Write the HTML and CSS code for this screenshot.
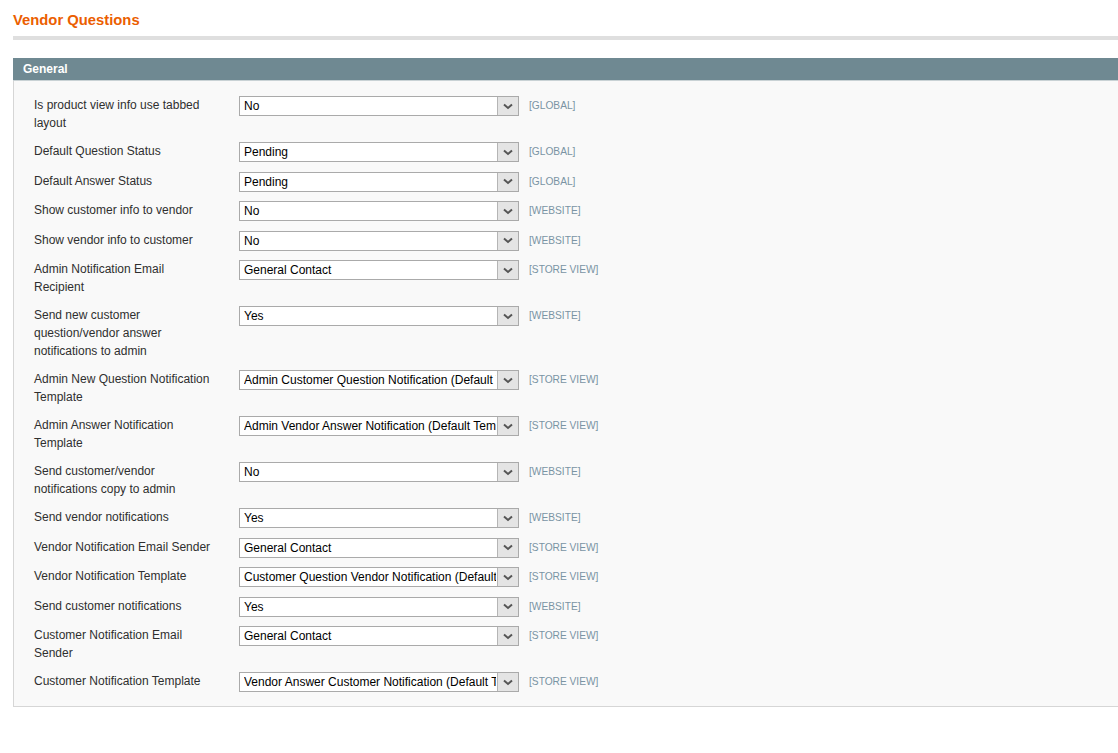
FILE: index.html
```html
<!DOCTYPE html>
<html lang="en">
<head>
  <meta charset="UTF-8">
  <title>Vendor Questions</title>
  <link rel="stylesheet" href="styles.css">
</head>
<body>
  <div class="page">
    <div class="content-header">
      <h3>Vendor Questions</h3>
    </div>

    <div class="section">
      <div class="section-head">
        <h4>General</h4>
      </div>
      <div class="fieldset">
        <div class="row">
          <label class="label">Is product view info use tabbed layout</label>
          <div class="field"><span class="select"><select><option>No</option></select><span class="arrow"><svg width="10" height="7" viewBox="0 0 10 7"><path d="M1 1.5 L5 5 L9 1.5" fill="none" stroke="#555" stroke-width="2"/></svg></span></span></div>
          <span class="scope">[GLOBAL]</span>
        </div>
        <div class="row">
          <label class="label">Default Question Status</label>
          <div class="field"><span class="select"><select><option>Pending</option></select><span class="arrow"><svg width="10" height="7" viewBox="0 0 10 7"><path d="M1 1.5 L5 5 L9 1.5" fill="none" stroke="#555" stroke-width="2"/></svg></span></span></div>
          <span class="scope">[GLOBAL]</span>
        </div>
        <div class="row">
          <label class="label">Default Answer Status</label>
          <div class="field"><span class="select"><select><option>Pending</option></select><span class="arrow"><svg width="10" height="7" viewBox="0 0 10 7"><path d="M1 1.5 L5 5 L9 1.5" fill="none" stroke="#555" stroke-width="2"/></svg></span></span></div>
          <span class="scope">[GLOBAL]</span>
        </div>
        <div class="row">
          <label class="label">Show customer info to vendor</label>
          <div class="field"><span class="select"><select><option>No</option></select><span class="arrow"><svg width="10" height="7" viewBox="0 0 10 7"><path d="M1 1.5 L5 5 L9 1.5" fill="none" stroke="#555" stroke-width="2"/></svg></span></span></div>
          <span class="scope">[WEBSITE]</span>
        </div>
        <div class="row">
          <label class="label">Show vendor info to customer</label>
          <div class="field"><span class="select"><select><option>No</option></select><span class="arrow"><svg width="10" height="7" viewBox="0 0 10 7"><path d="M1 1.5 L5 5 L9 1.5" fill="none" stroke="#555" stroke-width="2"/></svg></span></span></div>
          <span class="scope">[WEBSITE]</span>
        </div>
        <div class="row">
          <label class="label">Admin Notification Email Recipient</label>
          <div class="field"><span class="select"><select><option>General Contact</option></select><span class="arrow"><svg width="10" height="7" viewBox="0 0 10 7"><path d="M1 1.5 L5 5 L9 1.5" fill="none" stroke="#555" stroke-width="2"/></svg></span></span></div>
          <span class="scope">[STORE VIEW]</span>
        </div>
        <div class="row">
          <label class="label">Send new customer question/vendor answer notifications to admin</label>
          <div class="field"><span class="select"><select><option>Yes</option></select><span class="arrow"><svg width="10" height="7" viewBox="0 0 10 7"><path d="M1 1.5 L5 5 L9 1.5" fill="none" stroke="#555" stroke-width="2"/></svg></span></span></div>
          <span class="scope">[WEBSITE]</span>
        </div>
        <div class="row">
          <label class="label">Admin New Question Notification Template</label>
          <div class="field"><span class="select"><select><option>Admin Customer Question Notification (Default Template from Locale)</option></select><span class="arrow"><svg width="10" height="7" viewBox="0 0 10 7"><path d="M1 1.5 L5 5 L9 1.5" fill="none" stroke="#555" stroke-width="2"/></svg></span></span></div>
          <span class="scope">[STORE VIEW]</span>
        </div>
        <div class="row">
          <label class="label">Admin Answer Notification Template</label>
          <div class="field"><span class="select"><select><option>Admin Vendor Answer Notification (Default Template from Locale)</option></select><span class="arrow"><svg width="10" height="7" viewBox="0 0 10 7"><path d="M1 1.5 L5 5 L9 1.5" fill="none" stroke="#555" stroke-width="2"/></svg></span></span></div>
          <span class="scope">[STORE VIEW]</span>
        </div>
        <div class="row">
          <label class="label">Send customer/vendor notifications copy to admin</label>
          <div class="field"><span class="select"><select><option>No</option></select><span class="arrow"><svg width="10" height="7" viewBox="0 0 10 7"><path d="M1 1.5 L5 5 L9 1.5" fill="none" stroke="#555" stroke-width="2"/></svg></span></span></div>
          <span class="scope">[WEBSITE]</span>
        </div>
        <div class="row">
          <label class="label">Send vendor notifications</label>
          <div class="field"><span class="select"><select><option>Yes</option></select><span class="arrow"><svg width="10" height="7" viewBox="0 0 10 7"><path d="M1 1.5 L5 5 L9 1.5" fill="none" stroke="#555" stroke-width="2"/></svg></span></span></div>
          <span class="scope">[WEBSITE]</span>
        </div>
        <div class="row">
          <label class="label">Vendor Notification Email Sender</label>
          <div class="field"><span class="select"><select><option>General Contact</option></select><span class="arrow"><svg width="10" height="7" viewBox="0 0 10 7"><path d="M1 1.5 L5 5 L9 1.5" fill="none" stroke="#555" stroke-width="2"/></svg></span></span></div>
          <span class="scope">[STORE VIEW]</span>
        </div>
        <div class="row">
          <label class="label">Vendor Notification Template</label>
          <div class="field"><span class="select"><select><option>Customer Question Vendor Notification (Default Template from Locale)</option></select><span class="arrow"><svg width="10" height="7" viewBox="0 0 10 7"><path d="M1 1.5 L5 5 L9 1.5" fill="none" stroke="#555" stroke-width="2"/></svg></span></span></div>
          <span class="scope">[STORE VIEW]</span>
        </div>
        <div class="row">
          <label class="label">Send customer notifications</label>
          <div class="field"><span class="select"><select><option>Yes</option></select><span class="arrow"><svg width="10" height="7" viewBox="0 0 10 7"><path d="M1 1.5 L5 5 L9 1.5" fill="none" stroke="#555" stroke-width="2"/></svg></span></span></div>
          <span class="scope">[WEBSITE]</span>
        </div>
        <div class="row">
          <label class="label">Customer Notification Email Sender</label>
          <div class="field"><span class="select"><select><option>General Contact</option></select><span class="arrow"><svg width="10" height="7" viewBox="0 0 10 7"><path d="M1 1.5 L5 5 L9 1.5" fill="none" stroke="#555" stroke-width="2"/></svg></span></span></div>
          <span class="scope">[STORE VIEW]</span>
        </div>
        <div class="row">
          <label class="label">Customer Notification Template</label>
          <div class="field"><span class="select"><select><option>Vendor Answer Customer Notification (Default Template from Locale)</option></select><span class="arrow"><svg width="10" height="7" viewBox="0 0 10 7"><path d="M1 1.5 L5 5 L9 1.5" fill="none" stroke="#555" stroke-width="2"/></svg></span></span></div>
          <span class="scope">[STORE VIEW]</span>
        </div>
      </div>
    </div>
  </div>
</body>
</html>
```

FILE: styles.css
```css
html, body {
  overflow: hidden;
}
body {
  margin: 0;
  background: #fff;
  font-family: "Liberation Sans", Arial, sans-serif;
  font-size: 12px;
  color: #2f2f2f;
}
.page {
  width: 1130px;
  padding-left: 13px;
}
.content-header {
  padding-top: 10px;
  padding-bottom: 6px;
  border-bottom: 4px solid #dfdfdf;
}
.content-header h3 {
  margin: 0;
  font-size: 14.8px;
  line-height: 20px;
  font-weight: bold;
  color: #eb5e00;
}
.section {
  margin-top: 18px;
}
.section-head {
  background: #6f8992;
  padding: 0 10px;
  height: 22px;
  border-bottom: 1px solid #c9d2d5;
}
.section-head h4 {
  margin: 0;
  font-size: 12px;
  line-height: 22px;
  font-weight: bold;
  color: #fff;
}
.fieldset {
  background: #f9f9f9;
  border: 1px solid #d6d6d6;
  border-top: none;
  padding: 15px 20px 14px;
  display: flex;
  flex-direction: column;
  gap: 10px;
}
.row {
  display: flex;
  align-items: flex-start;
}
.label {
  width: 178px;
  margin-right: 27px;
  line-height: 18px;
}
.field {
  height: 19.5px;
}
.select {
  position: relative;
  display: block;
  width: 280px;
  height: 20px;
}
.select select {
  appearance: none;
  -webkit-appearance: none;
  display: block;
  width: 280px;
  height: 20px;
  margin: 0;
  padding: 0 22px 0 4px;
  border: 1px solid #aaa;
  border-radius: 0;
  background: #fff;
  font-family: "Liberation Sans", Arial, sans-serif;
  font-size: 12px;
  color: #000;
  box-sizing: border-box;
}
.arrow {
  position: absolute;
  top: 1px;
  right: 1px;
  width: 20px;
  height: 18px;
  background: #e4e4e4;
  border-left: 1px solid #b5b5b5;
  display: flex;
  align-items: center;
  justify-content: center;
}
.scope {
  margin-left: 10px;
  padding-top: 1px;
  font-size: 10.2px;
  line-height: 18px;
  color: #7a94a4;
}
```
